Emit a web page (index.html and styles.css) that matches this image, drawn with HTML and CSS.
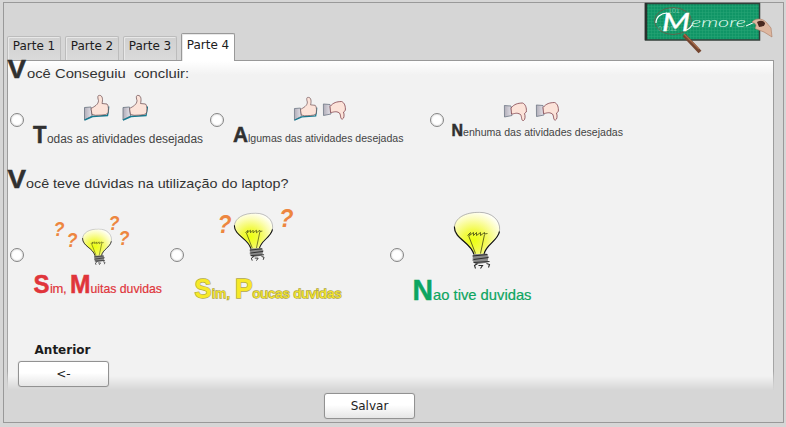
FILE: index.html
```html
<!DOCTYPE html>
<html lang="pt">
<head>
<meta charset="utf-8">
<title>Memore</title>
<link rel="stylesheet" href="styles.css">
</head>
<body>
<svg class="defs" width="0" height="0" aria-hidden="true">
  <defs>
    <linearGradient id="cuff"><stop offset="0" stop-color="#b0adb8"/><stop offset="1" stop-color="#e6e3ea"/></linearGradient>
    <radialGradient id="glow" cx=".42" cy=".66" r=".68"><stop offset="0" stop-color="#ecff10"/><stop offset=".35" stop-color="#f2fa4a"/><stop offset=".75" stop-color="#fcfdb8"/><stop offset="1" stop-color="#fffff6"/></radialGradient>
    <pattern id="mesh" width="3" height="3" patternUnits="userSpaceOnUse"><rect width="3" height="3" fill="#109566"/><path d="M0 .5H3M.5 0V3" stroke="#28a577" stroke-width=".5"/></pattern>
    <symbol id="up" viewBox="0 0 26 27">
      <path d="M1 13 7.500 12.500 8.500 21.500 1 25.500Z" fill="url(#cuff)" stroke="#67727f" stroke-width=".8"/>
      <path d="M1 25.700 9 22 24 21 25.500 12" fill="none" stroke="#167b91" stroke-width="1.400"/>
      <path d="M7.500 14C11 12 15 10 15 6 13.700 2 14.500.8 16 .8 19.600 1 19.300 6 18.500 9L23.500 9.500C25.500 11 25 17 24.300 19 22 21 15 20.500 12 20.800L8.500 20Z" fill="#fce3d9" stroke="#65464b" stroke-width=".7"/>
    </symbol>
    <symbol id="down" viewBox="0 0 24 20">
      <path d="M.8 3.500 7.500 4 8.500 13.500 1 15Z" fill="url(#cuff)" stroke="#6d7684" stroke-width=".8"/>
      <path d="M7.500 6C11 2 14 1.200 19 1 22 2 23.300 6 22.800 10L21 11.500C22 14 21.700 18 20 18.500 17.500 19 18.700 15 17 12.500 13 10 11 12 8 12Z" fill="#fce3d9" stroke="#80404a" stroke-width=".8"/>
    </symbol>
    <symbol id="bulb" viewBox="0 0 47 58">
      <path d="M.8 17C1 6 12 .8 26 .8 39 1 46.500 9 46.200 18 45 30 32 32 30.500 43L20.500 43C18 31 2 29 .8 17Z" fill="url(#glow)" stroke="#888" stroke-width=".6"/>
      <path d="M.8 15C1 28 17 30 20.500 43M46 20C44 30 32 33 30.500 43" fill="none" stroke="#111" stroke-width="1.200"/>
      <path d="M14 24 17 21 16 24 20 21 20 24 23 21 23 24 27 21 27 24 31 21 31 22.500 34 22M15 24 22 42M31 23 27 42" fill="none" stroke="#3d4210" stroke-width=".8"/>
      <path d="M19.500 43 33 42 35 45 34 51 22 53 19 49Z" fill="#8a8a8a"/>
      <path d="M19 44.500 34 43M20 48 35 46M20 51 36 50M24 52 21 54 22 57M25 54 29 54 27 57M33 52 36 53 35 56" fill="none" stroke="#2b2b2b" stroke-width="1.100"/>
    </symbol>
  </defs>
</svg>

<div class="frame">
  <header class="header">
    <nav class="tabs">
      <a class="tab">Parte 1</a>
      <a class="tab">Parte 2</a>
      <a class="tab">Parte 3</a>
      <a class="tab tab-active">Parte 4</a>
    </nav>
    <svg class="logo" width="130" height="51" viewBox="645 3 130 51">
      <rect x="645.500" y="3.500" width="114" height="36.500" fill="url(#mesh)" stroke="#333f3a" stroke-width="1.500"/>
      <path d="M646 3V40" stroke="#29302d" stroke-width="2.500"/>
      <g class="bits"><text x="668" y="13">101</text><text x="658" y="31">01011</text></g>
      <ellipse cx="673" cy="21" rx="18.500" ry="13.500" fill="none" stroke="#64604a" stroke-width=".9"/>
      <path d="M656 23C656 17 661 13 667 13M685 30Q689 30 692 25" fill="none" stroke="#fff" stroke-width="1.200"/>
      <text class="logo-m" x="662" y="31" textLength="28" lengthAdjust="spacingAndGlyphs">M</text>
      <text class="logo-rest" x="691" y="27" textLength="55" lengthAdjust="spacingAndGlyphs">emore</text>
      <path d="M746 26 755 22" stroke="#fff"/>
      <path d="M684 35 700 52" stroke="#74452f" stroke-width="4"/>
      <path d="M684 34 699 49" stroke="#a66b4b" stroke-width="1.200"/>
      <path d="M752 22C755 18 762 18 766 22L771 28 772 37 764 32 756 29C753 28 760 25 752 22Z" fill="#deb7a0" stroke="#a9785f" stroke-width=".6"/>
      <path d="M757 22Q762 19 765 23 765 27 759 27Z" fill="#4a2920"/>
    </svg>
  </header>

  <main class="panel">
    <svg class="question" width="300" height="24" viewBox="8 61 300 24">
      <text class="cap" x="7.500" y="78.300" font-size="25.500" textLength="18.500" lengthAdjust="spacingAndGlyphs">V</text>
      <text class="ask" x="27" y="78.300" textLength="162" lengthAdjust="spacingAndGlyphs">ocê Conseguiu&#160; concluir:</text>
    </svg>
    <div class="options options-done">
      <label class="option"><input class="radio" type="radio" name="done">
        <svg width="178" height="70" viewBox="30 85 178 70">
          <use href="#up" x="83.500" y="94.500" width="26" height="27"/><use href="#up" x="122" y="94.500" width="26" height="27"/>
          <text class="cap" x="33" y="143" font-size="23.500" textLength="13.500" lengthAdjust="spacingAndGlyphs">T</text>
          <text class="caption" x="47" y="143" textLength="156" lengthAdjust="spacingAndGlyphs">odas as atividades desejadas</text>
        </svg></label>
      <label class="option"><input class="radio" type="radio" name="done">
        <svg width="190" height="70" viewBox="230 85 190 70">
          <use href="#up" x="293.500" y="96.500" width="24" height="25"/><use href="#down" x="322.500" y="100.500" width="24" height="20"/>
          <text class="cap" x="233" y="142" font-size="21.500" textLength="15" lengthAdjust="spacingAndGlyphs">A</text>
          <text class="caption narrow" x="248" y="142" textLength="155.500" lengthAdjust="spacingAndGlyphs">lgumas das atividades desejadas</text>
        </svg></label>
      <label class="option"><input class="radio" type="radio" name="done">
        <svg width="190" height="70" viewBox="450 85 190 70">
          <use href="#down" x="503.500" y="102" width="24" height="20"/><use href="#down" x="535.500" y="101.500" width="24" height="20"/>
          <text class="cap" x="451.500" y="136" font-size="16" textLength="11.500" lengthAdjust="spacingAndGlyphs">N</text>
          <text class="caption narrow" x="463" y="136" textLength="160" lengthAdjust="spacingAndGlyphs">enhuma das atividades desejadas</text>
        </svg></label>
    </div>
    <svg class="question" width="300" height="50" viewBox="8 155 300 50">
      <text class="cap" x="7.500" y="188.300" font-size="25.500" textLength="18.500" lengthAdjust="spacingAndGlyphs">V</text>
      <text class="ask" x="26" y="188.300" textLength="262.500" lengthAdjust="spacingAndGlyphs">ocê teve dúvidas na utilização do laptop?</text>
    </svg>
    <div class="options options-doubt">
      <label class="option"><input class="radio" type="radio" name="doubt">
        <svg width="138" height="100" viewBox="30 205 138 100">
          <g class="mark" font-size="20.500"><text x="53.500" y="235.500" textLength="11" lengthAdjust="spacingAndGlyphs">?</text><text x="66.500" y="246.500" textLength="11" lengthAdjust="spacingAndGlyphs">?</text><text x="108.500" y="229.500" textLength="11" lengthAdjust="spacingAndGlyphs">?</text><text x="118.500" y="244.500" textLength="11" lengthAdjust="spacingAndGlyphs">?</text></g>
          <use href="#bulb" x="82" y="228.500" width="30" height="37"/>
          <g class="red">
            <text class="big" x="33.500" y="292.700" font-size="25.500" textLength="16" lengthAdjust="spacingAndGlyphs">S</text>
            <text class="small" x="50" y="292.500" textLength="16.500">im,</text>
            <text class="big" x="70" y="292.700" font-size="25.500" textLength="20.500" lengthAdjust="spacingAndGlyphs">M</text>
            <text class="small" x="90.500" y="292.500" textLength="71.500" lengthAdjust="spacingAndGlyphs">uitas duvidas</text>
          </g>
        </svg></label>
      <label class="option"><input class="radio" type="radio" name="doubt">
        <svg width="190" height="100" viewBox="190 205 190 100">
          <g class="mark" font-size="26"><text x="217.500" y="232.500" textLength="14" lengthAdjust="spacingAndGlyphs">?</text><text x="279" y="226.500" textLength="14.500" lengthAdjust="spacingAndGlyphs">?</text></g>
          <use href="#bulb" x="233.500" y="212.500" width="40" height="49"/>
          <g class="yellow">
            <text class="big" x="194.500" y="297.700" font-size="27" textLength="17" lengthAdjust="spacingAndGlyphs">S</text>
            <text class="small" x="212" y="297.500" textLength="18">im,</text>
            <text class="big" x="235" y="297.700" font-size="27" textLength="17.500" lengthAdjust="spacingAndGlyphs">P</text>
            <text class="small" x="252.500" y="297.500" textLength="89" lengthAdjust="spacingAndGlyphs">oucas duvidas</text>
          </g>
        </svg></label>
      <label class="option"><input class="radio" type="radio" name="doubt">
        <svg width="190" height="100" viewBox="410 205 190 100">
          <use href="#bulb" x="453.500" y="211.500" width="47" height="58"/>
          <g class="green">
            <text class="big" x="412.500" y="299.500" font-size="29" textLength="20.500" lengthAdjust="spacingAndGlyphs">N</text>
            <text class="small" x="433" y="299.500" textLength="98.500" lengthAdjust="spacingAndGlyphs">ao tive duvidas</text>
          </g>
        </svg></label>
    </div>
    <div class="back">
      <span class="back-label">Anterior</span>
      <button class="button">&lt;-</button>
    </div>
  </main>

  <footer class="footer"><button class="button">Salvar</button></footer>
</div>
</body>
</html>
```
FILE: styles.css
```css
* { box-sizing: border-box; }

body {
  margin: 0;
  padding: 2px 2px 4px 3px;
  height: 427px;
  overflow: hidden;
  background: #d6d6d6;
  font: 12px "DejaVu Sans", sans-serif;
  color: #1c1c1c;
}

svg { display: block; overflow: visible; }
.defs { position: absolute; }

.frame {
  height: 421px;
  border: 1px solid #999;
  display: flex;
  flex-direction: column;
}

.header {
  height: 57px;
  padding: 0 8px 0 3px;
  display: flex;
  justify-content: space-between;
  align-items: flex-start;
}

.tabs {
  display: flex;
  align-items: flex-end;
  gap: 4px;
  height: 58px;
}

.tab {
  width: 54px;
  height: 24px;
  margin-bottom: 1px;
  border: 1px solid #bcbcbc;
  border-bottom: 0;
  border-radius: 2px 2px 0 0;
  box-shadow: inset 1px 1px #e8e8e8;
  background: linear-gradient(#d0d0d0, #dadada);
  line-height: 19px;
  text-align: center;
  white-space: nowrap;
}

.tab-active {
  position: relative;
  height: 28px;
  margin-bottom: 0;
  border-color: #999;
  background: #fff;
  line-height: 22px;
}

.panel {
  height: 330px;
  width: 767px;
  margin-left: 3px;
  border: 1px solid;
  border-image: linear-gradient(#999 0, #a5a5a5 94%, transparent) 1;
  border-bottom: 0;
  background: linear-gradient(#fff 0, #f2f2f2 14px, #f2f2f2 315px, #d6d6d6 329px);
}

.options { display: grid; }
.options-done { grid-template-columns: 200px 220px 1fr; height: 70px; }
.options-doubt { grid-template-columns: 160px 220px 1fr; height: 100px; }

.option {
  display: flex;
  align-items: center;
  gap: 6px;
  padding-left: 2px;
}

.radio {
  appearance: none;
  flex: none;
  width: 14px;
  height: 14px;
  margin: 0;
  border: 1px solid #858585;
  border-radius: 50%;
  background: #fff;
  box-shadow: inset 0 0 2px #bbb;
}

text { font-family: "Liberation Sans", sans-serif; }
.cap { font-weight: bold; fill: #303030; stroke: #303030; stroke-width: .5px; }
.ask { font-size: 13.500px; fill: #333; }
.caption { font-size: 12px; fill: #444; }
.narrow { font-size: 11.500px; }
.mark { font-weight: bold; font-style: italic; fill: #ed8640; }
.big { font-weight: bold; stroke-width: .5px; }
.small { font-size: 13px; stroke-width: .2px; }
.red { fill: #e0353b; stroke: #e0353b; }
.yellow { fill: #f7e928; stroke: #b0a646; paint-order: stroke; }
.yellow .big, .yellow .small { stroke-width: 1.300px; }
.green { fill: #0da560; stroke: #0da560; }
.green .small { font-size: 14.500px; }

.bits { font-size: 7px; fill: #72c6a4; }
.logo-m { font: italic 26px Lato, sans-serif; fill: #fff; stroke: #fff; stroke-width: .4px; }
.logo-rest { font: italic 300 14px Lato, sans-serif; fill: #e6fff5; }

.back {
  width: 91px;
  margin: 37px 0 0 10px;
  text-align: center;
}

.back-label {
  display: block;
  height: 19px;
  line-height: 16px;
  font-weight: bold;
  padding-right: 2px;
}

.button {
  display: block;
  width: 91px;
  height: 26px;
  padding: 0;
  border: 1px solid #929292;
  border-radius: 3px;
  background: linear-gradient(#fff 45%, #e6e6e6);
  box-shadow: 0 0 1px #aaa;
  font: inherit;
  color: #222;
}

.footer {
  display: flex;
  padding: 3px 0 0 320px;
}
```
